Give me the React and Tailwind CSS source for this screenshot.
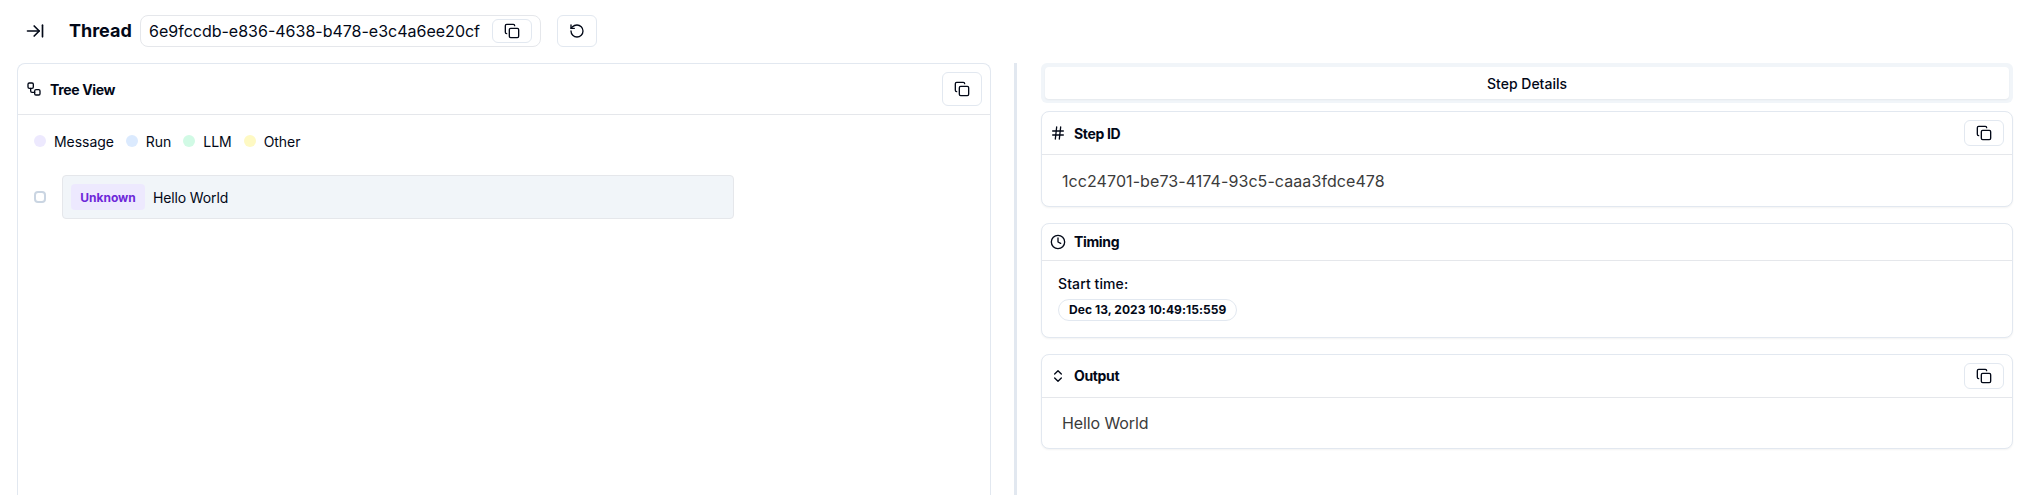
import React from "react";
import {
  ArrowRightToLine,
  ChevronsUpDown,
  Clock,
  Copy,
  Hash,
  RotateCcw,
  Workflow,
} from "lucide-react";

const legend = [
  { label: "Message", dot: "bg-[#ede9fe]" },
  { label: "Run", dot: "bg-[#dbeafe]" },
  { label: "LLM", dot: "bg-[#d1fae5]" },
  { label: "Other", dot: "bg-[#fef9c3]" },
];

function IconButton({ icon: Icon, className }) {
  return (
    <button
      className={`flex w-10 shrink-0 items-center justify-center rounded-md border border-[#e2e8f0] bg-white ${className}`}
    >
      <Icon size={16} />
    </button>
  );
}

function Card({ icon: Icon, title, titleClass = "", copy, children }) {
  return (
    <section className="rounded-lg border border-[#e2e8f0] bg-white shadow-xs">
      <header className="flex items-center justify-between border-b border-gray-200 p-2">
        <h3 className="flex items-center gap-2 text-sm font-bold tracking-tight">
          <Icon size={16} />
          <span className={titleClass}>{title}</span>
        </h3>
        {copy && <IconButton icon={Copy} className="h-[26px]" />}
      </header>
      {children}
    </section>
  );
}

export default function App() {
  return (
    <div className="flex h-[495px] flex-col overflow-hidden bg-white font-['Inter',sans-serif] text-[#020817]">
      <header className="flex h-[63px] shrink-0 items-center pb-px pl-[25px]">
        <ArrowRightToLine size={20} />
        <h1 className="ml-6 w-[71px] text-lg font-bold">Thread</h1>
        <div className="flex h-8 w-[401px] items-center justify-between rounded-lg border border-gray-200 px-2">
          <span className="whitespace-nowrap">6e9fccdb-e836-4638-b478-e3c4a6ee20cf</span>
          <IconButton icon={Copy} className="h-6" />
        </div>
        <IconButton icon={RotateCcw} className="ml-4 h-8" />
      </header>

      <main className="flex min-h-0 flex-1 pl-[17px]">
        <section className="w-[974px] shrink-0 rounded-t-lg border border-b-0 border-[#e2e8f0]">
          <header className="flex items-center justify-between border-b border-gray-200 p-2">
            <h2 className="flex items-center gap-2 text-sm font-bold tracking-tight">
              <Workflow size={16} />
              <span className="pt-0.5">Tree View</span>
            </h2>
            <IconButton icon={Copy} className="h-[34px]" />
          </header>
          <div className="p-4">
            <ul className="flex h-5 items-center gap-3 text-sm tracking-[-0.05px]">
              {legend.map(({ label, dot }) => (
                <li key={label} className="flex items-center gap-2">
                  <span className={`size-3 rounded-full ${dot}`} />
                  <span className="pt-0.5">{label}</span>
                </li>
              ))}
            </ul>
            <div className="mt-6 flex items-center gap-4">
              <span className="mb-px size-3 rounded border-2 border-slate-300" />
              <div className="flex h-11 w-[672px] items-center gap-2 rounded border border-gray-200 bg-[#f1f5f9] px-2 text-sm">
                <span className="flex h-[26px] w-[74px] items-center justify-center rounded bg-[#ede9fe] pt-0.5 text-xs font-bold text-[#6d28d9]">
                  Unknown
                </span>
                <span className="pt-0.5 tracking-[-0.14px]">Hello World</span>
              </div>
            </div>
          </div>
        </section>

        <div className="ml-[23px] w-[3px] bg-[#e2e8f0]" />

        <aside className="ml-6 flex w-[972px] flex-col">
          <div className="h-10 shrink-0 rounded-md bg-[#f1f5f9] p-1">
            <button className="flex h-8 w-full items-center justify-center rounded-sm bg-white pt-0.5 text-sm font-medium shadow-xs">
              Step Details
            </button>
          </div>
          <div className="mt-2 flex flex-col gap-4">
            <Card icon={Hash} title="Step ID" titleClass="pt-0.5" copy>
              <div className="flex h-[51px] items-center px-5 tracking-[0.08px] text-[#3b3b3b]">
                1cc24701-be73-4174-93c5-caaa3fdce478
              </div>
            </Card>
            <Card icon={Clock} title="Timing">
              <div className="flex h-[76px] flex-col items-start px-4 pt-[13px]">
                <span className="text-sm font-medium tracking-[0.1px]">Start time:</span>
                <span className="mt-[5px] flex h-[22px] w-[179px] items-center rounded-full border border-[#e2e8f0] px-2.5 text-xs font-bold tracking-[0.06px] whitespace-nowrap">
                  Dec 13, 2023 10:49:15:559
                </span>
              </div>
            </Card>
            <Card icon={ChevronsUpDown} title="Output" copy>
              <div className="flex h-[50px] items-center px-5 tracking-[-0.1px] text-[#3b3b3b]">
                Hello World
              </div>
            </Card>
          </div>
        </aside>
      </main>
    </div>
  );
}
